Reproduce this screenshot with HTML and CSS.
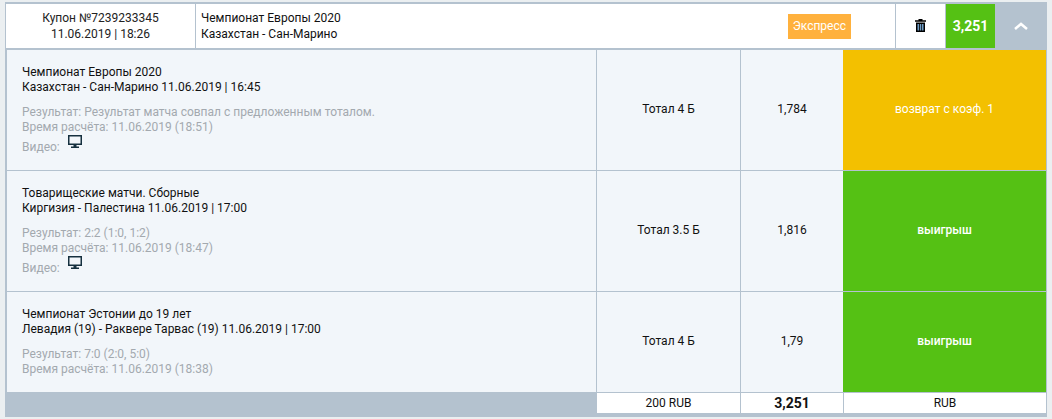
FILE: index.html
```html
<!DOCTYPE html>
<html lang="ru">
<head>
    <meta charset="UTF-8">
    <title>Купон</title>
    <link rel="stylesheet" href="styles.css">
</head>
<body>
    <div class="coupon">
        <div class="coupon-head">
            <div class="coupon-id">Купон №7239233345<br>11.06.2019 | 18:26</div>
            <div class="coupon-event">
                <div class="coupon-match">Чемпионат Европы 2020<br>Казахстан - Сан-Марино</div>
                <span class="badge">Экспресс</span>
            </div>
            <div class="coupon-del">
                <svg class="icon-trash" width="11" height="13" viewBox="0 0 11 13"><path d="M3.500 0h4v1.200H11v1.600H0V1.200h3.500z" fill="#000"/><path d="M1 3.500h9V13H1z" fill="#000"/><path d="M2.500 5h1.500v6.500H2.500zM4.800 5h1.500v6.500H4.800zM7 5h1.500v6.500H7z" fill="#6f9cc4"/></svg>
            </div>
            <div class="coupon-total">3,251</div>
            <div class="coupon-toggle">
                <svg width="14" height="8" viewBox="0 0 14 8"><path d="M1 7l6-5 6 5" fill="none" stroke="#fff" stroke-width="2.500"/></svg>
            </div>
        </div>
        <div class="bet-row row-tall">
            <div class="bet-info">
                <div class="bet-title">Чемпионат Европы 2020<br>Казахстан - Сан-Марино 11.06.2019 | 16:45</div>
                <div class="bet-meta">Результат: Результат матча совпал с предложенным тоталом.<br>Время расчёта: 11.06.2019 (18:51)<br>Видео:
                    <svg class="icon-video" width="14" height="14" viewBox="0 0 14 14"><path d="M0 0h14v10H8.500v1.500H11V13H3v-1.500h2.500V10H0zM1.500 1.500v7h11v-7z" fill="#16303f"/></svg>
                </div>
            </div>
            <div class="bet-type">Тотал 4 Б</div>
            <div class="bet-odds">1,784</div>
            <div class="bet-status status-return">возврат с коэф. 1</div>
        </div>
        <div class="bet-row row-tall">
            <div class="bet-info">
                <div class="bet-title">Товарищеские матчи. Сборные<br>Киргизия - Палестина 11.06.2019 | 17:00</div>
                <div class="bet-meta">Результат: 2:2 (1:0, 1:2)<br>Время расчёта: 11.06.2019 (18:47)<br>Видео:
                    <svg class="icon-video" width="14" height="14" viewBox="0 0 14 14"><path d="M0 0h14v10H8.500v1.500H11V13H3v-1.500h2.500V10H0zM1.500 1.500v7h11v-7z" fill="#16303f"/></svg>
                </div>
            </div>
            <div class="bet-type">Тотал 3.5 Б</div>
            <div class="bet-odds">1,816</div>
            <div class="bet-status status-win">выигрыш</div>
        </div>
        <div class="bet-row row-short">
            <div class="bet-info">
                <div class="bet-title">Чемпионат Эстонии до 19 лет<br>Левадия (19) - Раквере Тарвас (19) 11.06.2019 | 17:00</div>
                <div class="bet-meta">Результат: 7:0 (2:0, 5:0)<br>Время расчёта: 11.06.2019 (18:38)</div>
            </div>
            <div class="bet-type">Тотал 4 Б</div>
            <div class="bet-odds">1,79</div>
            <div class="bet-status status-win">выигрыш</div>
        </div>
        <div class="coupon-foot">
            <div class="foot-space"></div>
            <div class="foot-sum">200 RUB</div>
            <div class="foot-odds">3,251</div>
            <div class="foot-cur">RUB</div>
        </div>
    </div>
</body>
</html>
```

FILE: styles.css
```css
body {
    margin: 0;
    background-color: #ebeff1;
    font-family: Roboto, sans-serif;
    font-size: 12px;
    color: #111;
    overflow: hidden;
}
.coupon {
    width: 1042px;
    margin: 2px 0 0 5px;
    background-color: #b4c2cf;
    padding-top: 2px;
    padding-bottom: 4px;
}
.coupon-head {
    display: flex;
    height: 44px;
    margin-left: 1px;
    margin-bottom: 2px;
    background-color: #fff;
    line-height: 16px;
}
.coupon-id {
    width: 189px;
    text-align: center;
    align-self: center;
    color: #222;
}
.coupon-event {
    flex: 1;
    display: flex;
    align-items: center;
    justify-content: space-between;
    border-left: 1px solid #b4c2cf;
    padding: 0 44px 0 5px;
}
.badge {
    background-color: #ffb13d;
    color: #fff;
    padding: 0 5px;
    line-height: 25px;
}
.coupon-del {
    width: 49px;
    display: flex;
    align-items: center;
    justify-content: center;
    border-left: 1px solid #b4c2cf;
    border-right: 1px solid #b4c2cf;
}
.icon-trash {
    margin-bottom: 1px;
}
.coupon-total {
    width: 49px;
    background-color: #55c114;
    color: #fff;
    font-weight: bold;
    font-size: 14px;
    display: flex;
    align-items: center;
    justify-content: center;
}
.coupon-toggle {
    width: 52px;
    background-color: #b4c2cf;
    display: flex;
    align-items: center;
    justify-content: center;
}
.bet-row {
    display: flex;
    margin-left: 2px;
    margin-right: 1px;
    margin-bottom: 1px;
    background-color: #f2f6fa;
}
.row-tall {
    height: 120px;
}
.row-short {
    height: 100px;
    margin-bottom: 0;
}
.bet-info {
    width: 574px;
    padding: 15px 0 0 15px;
    line-height: 15px;
}
.bet-title {
    color: #111;
}
.bet-meta {
    color: #a3a9af;
    margin-top: 10px;
}
.icon-video {
    margin-left: 5px;
    vertical-align: 2px;
}
.bet-type, .bet-odds {
    display: flex;
    align-items: center;
    justify-content: center;
    border-left: 1px solid #b4c2cf;
    padding-bottom: 2px;
}
.bet-type {
    width: 143px;
}
.bet-odds {
    width: 102px;
}
.bet-status {
    flex: 1;
    display: flex;
    align-items: center;
    justify-content: center;
    color: #fff;
    padding-bottom: 2px;
}
.status-return {
    background-color: #f3c000;
}
.status-win {
    background-color: #55c114;
    font-weight: 500;
}
.coupon-foot {
    display: flex;
    height: 21px;
    line-height: 20px;
    text-align: center;
}
.foot-space {
    width: 591px;
}
.foot-sum, .foot-odds, .foot-cur {
    background-color: #fff;
    border-left: 1px solid #b4c2cf;
    border-top: 1px solid #b4c2cf;
}
.foot-sum {
    width: 143px;
}
.foot-odds {
    width: 102px;
    font-weight: bold;
    font-size: 14px;
}
.foot-cur {
    flex: 1;
    margin-right: 1px;
}
```
